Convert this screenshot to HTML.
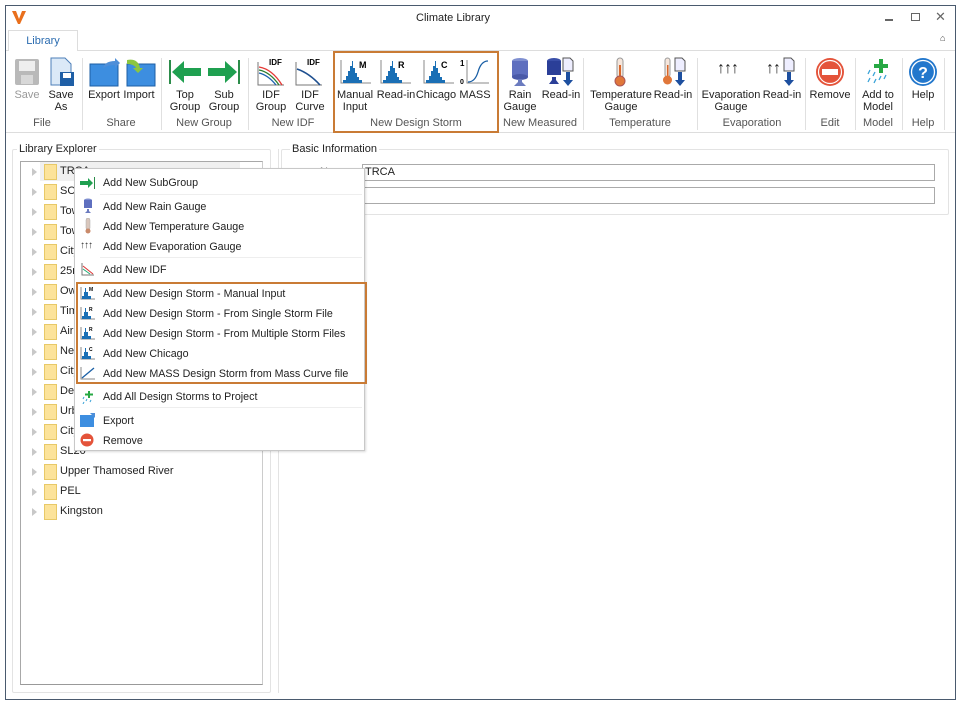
<!DOCTYPE html>
<html><head><meta charset="utf-8"><style>
*{margin:0;padding:0;box-sizing:border-box}
body{width:965px;height:709px;background:#fff;font-family:"Liberation Sans",sans-serif;font-size:11px;color:#222;position:relative;overflow:hidden}
.a{position:absolute}
.t{position:absolute;white-space:nowrap;font-size:11px;line-height:12px;text-align:center}
.gl{position:absolute;white-space:nowrap;font-size:11px;color:#555;text-align:center}
.sep{position:absolute;width:1px;background:#e0e0e0;top:58px;height:72px}
.mi{position:absolute;left:103px;font-size:10.7px;white-space:nowrap;color:#222}
.tr{position:absolute;left:32px;height:16px;font-size:11px;white-space:nowrap}
.tr i{position:absolute;left:0;top:4px;width:0;height:0;border-left:5px solid #c8c8c8;border-top:4px solid transparent;border-bottom:4px solid transparent}
.tr b{position:absolute;left:12px;top:0;width:13px;height:16px;background:#fce39a;border:1px solid #e8c968}
.tr span{position:absolute;left:28px;top:1px}
</style></head><body>
<div class="a" style="left:5px;top:5px;width:951px;height:695px;border:1px solid #4a5a6e"></div>
<svg class="a" style="left:11px;top:10px" width="16" height="15"><path d="M1 1 L5 1 L8 9 L11 1 L15 1 L9 14 L7 14 Z" fill="#e96f1c"/></svg>
<div class="a" style="left:0;width:906px;top:12px;text-align:center;font-size:11px">Climate Library</div>
<div class="a" style="left:885px;top:19px;width:8px;height:2px;background:#666"></div>
<div class="a" style="left:911px;top:13px;width:9px;height:8px;border:1px solid #666"></div>
<div class="a" style="left:935px;top:9px;font-size:13px;color:#666">✕</div>
<div class="a" style="left:940px;top:33px;font-size:9px;color:#444">⌂</div>
<div class="a" style="left:8px;top:30px;width:70px;height:21px;border:1px solid #ddd;border-bottom:none;background:#fff;color:#2b6cb0;text-align:center;line-height:20px">Library</div>
<div class="a" style="left:78px;top:50px;width:877px;height:1px;background:#ddd"></div>
<div class="a" style="left:6px;top:50px;width:2px;height:1px;background:#ddd"></div>
<div class="a" style="left:6px;top:132px;width:949px;height:1px;background:#ddd"></div>

<svg class="a" style="left:14px;top:58px" width="26" height="28"><rect x="1" y="1" width="24" height="26" rx="2" fill="#b9b9b9"/><rect x="5" y="3" width="16" height="10" fill="#eee"/><rect x="7" y="17" width="12" height="9" fill="#d8d8d8"/></svg>
<div class="t" style="left:10px;top:89px;width:34px;color:#999">Save</div>
<svg class="a" style="left:48px;top:57px" width="28" height="30"><path d="M3 1 H17 L23 7 V28 H3 Z" fill="#dbe9f7" stroke="#4e7fb8"/><rect x="12" y="15" width="14" height="14" fill="#1f5fa6"/><rect x="15" y="16" width="8" height="5" fill="#fff"/></svg>
<div class="t" style="left:44px;top:89px;width:34px">Save<br>As</div>
<div class="gl" style="left:20px;top:117px;width:44px">File</div>
<div class="sep" style="left:82px"></div>
<svg class="a" style="left:89px;top:57px" width="32" height="30"><rect x="1" y="7" width="28" height="22" fill="#3d8ee0" stroke="#1d5fa5"/><path d="M14 11 Q16 4 26 4 L26 1 L31 6 L26 11 L26 8 Q19 8 14 11Z" fill="#4f8fd8"/></svg>
<div class="t" style="left:86px;top:89px;width:36px">Export</div>
<svg class="a" style="left:124px;top:57px" width="32" height="30"><rect x="3" y="7" width="28" height="22" fill="#3d8ee0" stroke="#1d5fa5"/><path d="M3 3 Q14 1 16 11 L19 11 L14 16 L9 11 L12 11 Q10 7 3 7Z" fill="#8cc63f"/></svg>
<div class="t" style="left:121px;top:89px;width:36px">Import</div>
<div class="gl" style="left:90px;top:117px;width:62px">Share</div>
<div class="sep" style="left:161px"></div>
<svg class="a" style="left:169px;top:58px" width="34" height="28"><rect x="0" y="2" width="2" height="24" fill="#2c8c4a"/><path d="M3 14 L15 3 V10 H32 V18 H15 V25 Z" fill="#1fa050"/></svg>
<div class="t" style="left:166px;top:89px;width:38px">Top<br>Group</div>
<svg class="a" style="left:206px;top:58px" width="34" height="28"><rect x="32" y="2" width="2" height="24" fill="#2c8c4a"/><path d="M31 14 L19 3 V10 H2 V18 H19 V25 Z" fill="#1fa050"/></svg>
<div class="t" style="left:205px;top:89px;width:38px">Sub<br>Group</div>
<div class="gl" style="left:168px;top:117px;width:72px">New Group</div>
<div class="sep" style="left:248px"></div>
<svg class="a" style="left:256px;top:57px" width="30" height="30"><path d="M2 5 V28 H28" stroke="#777" fill="none"/><path d="M3 10 Q16 12 26 28" stroke="#e53935" fill="none" stroke-width="1.3"/><path d="M3 13 Q14 15 23 28" stroke="#2e7d32" fill="none" stroke-width="1.3"/><path d="M3 16 Q12 18 20 28" stroke="#1e63b0" fill="none" stroke-width="1.3"/><text x="13" y="8" font-size="8" font-weight="bold" font-family="Liberation Sans">IDF</text></svg>
<div class="t" style="left:253px;top:89px;width:36px">IDF<br>Group</div>
<svg class="a" style="left:294px;top:57px" width="30" height="30"><path d="M2 5 V28 H28" stroke="#777" fill="none"/><path d="M3 12 Q15 16 26 28" stroke="#1e4f8f" fill="none" stroke-width="1.6"/><text x="13" y="8" font-size="8" font-weight="bold" font-family="Liberation Sans">IDF</text></svg>
<div class="t" style="left:292px;top:89px;width:36px">IDF<br>Curve</div>
<div class="gl" style="left:262px;top:117px;width:62px">New IDF</div>
<svg class="a" style="left:340px;top:58px" width="32" height="26"><path d="M1 2 V25 H31" stroke="#888" fill="none"/><path d="M3 25 V22 H6 V18 H8 V13 H10 V8 H12 V3 H13 V10 H15 V15 H17 V19 H19 V22 H22 V25Z" fill="#1a6fb5"/><text x="19" y="10" font-size="9" font-weight="bold" font-family="Liberation Sans">M</text></svg>
<svg class="a" style="left:380px;top:58px" width="32" height="26"><path d="M1 2 V25 H31" stroke="#888" fill="none"/><path d="M3 25 V22 H6 V18 H8 V13 H10 V8 H12 V3 H13 V10 H15 V15 H17 V19 H19 V22 H22 V25Z" fill="#1a6fb5"/><text x="18" y="10" font-size="9" font-weight="bold" font-family="Liberation Sans">R</text></svg>
<svg class="a" style="left:423px;top:58px" width="32" height="26"><path d="M1 2 V25 H31" stroke="#888" fill="none"/><path d="M3 25 V22 H6 V18 H8 V13 H10 V8 H12 V3 H13 V10 H15 V15 H17 V19 H19 V22 H22 V25Z" fill="#1a6fb5"/><text x="18" y="10" font-size="9" font-weight="bold" font-family="Liberation Sans">C</text></svg>
<svg class="a" style="left:459px;top:58px" width="32" height="26"><text x="1" y="8" font-size="8" font-weight="bold" font-family="Liberation Sans">1</text><text x="1" y="26" font-size="7" font-weight="bold" font-family="Liberation Sans">0</text><path d="M8 2 V25 H30" stroke="#888" fill="none"/><path d="M9 24 Q16 24 19 14 Q22 3 29 3" stroke="#1a5fa5" fill="none" stroke-width="1.3"/></svg>
<div class="t" style="left:334px;top:89px;width:42px">Manual<br>Input</div>
<div class="t" style="left:375px;top:89px;width:42px">Read-in</div>
<div class="t" style="left:415px;top:89px;width:42px">Chicago</div>
<div class="t" style="left:457px;top:89px;width:36px">MASS</div>
<div class="gl" style="left:336px;top:117px;width:160px">New Design Storm</div>
<div class="a" style="left:333px;top:51px;width:166px;height:82px;border:2px solid #c97b35"></div>
<svg class="a" style="left:509px;top:57px" width="22" height="30"><ellipse cx="11" cy="4" rx="8" ry="3" fill="#7f8fd0"/><rect x="3" y="4" width="16" height="16" fill="#5e6fbf"/><ellipse cx="11" cy="20" rx="8" ry="3" fill="#4a5aa8"/><path d="M9 22 H13 V25 L17 29 H5 L9 25Z" fill="#6b7bbf"/></svg>
<div class="t" style="left:502px;top:89px;width:36px">Rain<br>Gauge</div>
<svg class="a" style="left:545px;top:57px" width="30" height="30"><ellipse cx="9" cy="4" rx="7" ry="3" fill="#3a4fa8"/><rect x="2" y="4" width="14" height="14" fill="#2b3f98"/><path d="M7 20 H11 V23 L14 27 H4 L7 23Z" fill="#2b3f98"/><path d="M18 1 H25 L28 4 V14 H18Z" fill="#eef" stroke="#555"/><path d="M21 15 V23 H18 L23 29 L28 23 H25 V15Z" fill="#1d4f9f"/></svg>
<div class="t" style="left:540px;top:89px;width:42px">Read-in</div>
<div class="gl" style="left:500px;top:117px;width:80px">New Measured</div>
<div class="sep" style="left:583px"></div>
<svg class="a" style="left:612px;top:57px" width="16" height="30"><rect x="5" y="1" width="6" height="20" rx="3" fill="#f5e6dc" stroke="#999"/><rect x="7" y="8" width="2" height="14" fill="#d9662a"/><circle cx="8" cy="24" r="5" fill="#e0773a" stroke="#a55"/></svg>
<div class="t" style="left:588px;top:89px;width:66px">Temperature<br>Gauge</div>
<svg class="a" style="left:662px;top:57px" width="26" height="30"><rect x="3" y="1" width="5" height="19" rx="2.5" fill="#f5e6dc" stroke="#999"/><rect x="5" y="8" width="1.5" height="13" fill="#d9662a"/><circle cx="5.5" cy="23" r="4.5" fill="#e0773a"/><path d="M13 1 H20 L23 4 V14 H13Z" fill="#eef" stroke="#555"/><path d="M16 15 V23 H13 L18 29 L23 23 H20 V15Z" fill="#1d4f9f"/></svg>
<div class="t" style="left:652px;top:89px;width:42px">Read-in</div>
<div class="gl" style="left:588px;top:117px;width:104px">Temperature</div>
<div class="sep" style="left:697px"></div>
<div class="a" style="left:717px;top:60px;font-size:16px;letter-spacing:-1px">↑↑↑</div>
<div class="t" style="left:701px;top:89px;width:60px">Evaporation<br>Gauge</div>
<div class="a" style="left:766px;top:60px;font-size:16px;letter-spacing:-1px">↑↑</div>
<svg class="a" style="left:782px;top:57px" width="14" height="30"><path d="M2 1 H9 L12 4 V14 H2Z" fill="#eef" stroke="#555"/><path d="M5 15 V23 H2 L7 29 L12 23 H9 V15Z" fill="#1d4f9f"/></svg>
<div class="t" style="left:761px;top:89px;width:42px">Read-in</div>
<div class="gl" style="left:700px;top:117px;width:104px">Evaporation</div>
<div class="sep" style="left:805px"></div>
<svg class="a" style="left:815px;top:57px" width="30" height="30"><circle cx="15" cy="15" r="14" fill="#e4533a"/><circle cx="15" cy="15" r="11.5" fill="none" stroke="#fff" stroke-width="1.2"/><rect x="7" y="12" width="16" height="6" fill="#fff"/></svg>
<div class="t" style="left:808px;top:89px;width:44px">Remove</div>
<div class="gl" style="left:810px;top:117px;width:40px">Edit</div>
<div class="sep" style="left:855px"></div>
<svg class="a" style="left:866px;top:58px" width="26" height="28"><rect x="13" y="1" width="4" height="14" fill="#27a844"/><rect x="8" y="6" width="14" height="4" fill="#27a844"/><g stroke="#3aa3d8" stroke-width="1.3"><path d="M4 12 L2 16M9 14 L7 18M4 20 L2 24M10 21 L8 25M15 18 L13 22M20 17 L18 21"/></g></svg>
<div class="t" style="left:858px;top:89px;width:40px">Add to<br>Model</div>
<div class="gl" style="left:858px;top:117px;width:40px">Model</div>
<div class="sep" style="left:902px"></div>
<svg class="a" style="left:908px;top:57px" width="30" height="30"><circle cx="15" cy="15" r="14" fill="#2277cc"/><circle cx="15" cy="15" r="11.5" fill="none" stroke="#fff" stroke-width="1.3"/><text x="15" y="21" text-anchor="middle" font-size="16" font-weight="bold" fill="#fff" font-family="Liberation Sans">?</text></svg>
<div class="t" style="left:904px;top:89px;width:38px">Help</div>
<div class="gl" style="left:904px;top:117px;width:38px">Help</div>
<div class="sep" style="left:944px"></div>

<div class="a" style="left:12px;top:149px;width:259px;height:544px;border:1px solid #e3e3e3;border-radius:2px"></div>
<div class="a" style="left:17px;top:143px;background:#fff;padding:0 2px">Library Explorer</div>
<div class="a" style="left:20px;top:161px;width:243px;height:524px;border:1px solid #a8a8a8;border-right-color:#ccc;border-bottom-color:#999"></div>
<div class="a" style="left:40px;top:162px;width:200px;height:19px;background:#f0f0f0"></div>
<div class="tr" style="top:164px"><i></i><b></b><span>TRCA</span></div>
<div class="tr" style="top:184px"><i></i><b></b><span>SCS</span></div>
<div class="tr" style="top:204px"><i></i><b></b><span>Tow</span></div>
<div class="tr" style="top:224px"><i></i><b></b><span>Tow</span></div>
<div class="tr" style="top:244px"><i></i><b></b><span>City</span></div>
<div class="tr" style="top:264px"><i></i><b></b><span>25m</span></div>
<div class="tr" style="top:284px"><i></i><b></b><span>Ow</span></div>
<div class="tr" style="top:304px"><i></i><b></b><span>Tim</span></div>
<div class="tr" style="top:324px"><i></i><b></b><span>Air</span></div>
<div class="tr" style="top:344px"><i></i><b></b><span>New</span></div>
<div class="tr" style="top:364px"><i></i><b></b><span>City</span></div>
<div class="tr" style="top:384px"><i></i><b></b><span>Dev</span></div>
<div class="tr" style="top:404px"><i></i><b></b><span>Urb</span></div>
<div class="tr" style="top:424px"><i></i><b></b><span>City</span></div>
<div class="tr" style="top:444px"><i></i><b></b><span>SL20</span></div>
<div class="tr" style="top:464px"><i></i><b></b><span>Upper Thamosed River</span></div>
<div class="tr" style="top:484px"><i></i><b></b><span>PEL</span></div>
<div class="tr" style="top:504px"><i></i><b></b><span>Kingston</span></div>

<div class="a" style="left:278px;top:149px;width:1px;height:544px;background:#e3e3e3"></div>
<div class="a" style="left:281px;top:149px;width:668px;height:66px;border:1px solid #e3e3e3;border-radius:2px"></div>
<div class="a" style="left:290px;top:143px;background:#fff;padding:0 2px">Basic Information</div>
<div class="a" style="left:320px;top:166px;color:#555">Name</div>
<div class="a" style="left:362px;top:164px;width:573px;height:17px;border:1px solid #aaa;padding-left:2px;line-height:15px">TRCA</div>
<div class="a" style="left:362px;top:187px;width:573px;height:17px;border:1px solid #aaa"></div>

<div class="a" style="left:74px;top:168px;width:291px;height:283px;background:#fff;border:1px solid #c8c8c8;box-shadow:1px 1px 2px rgba(0,0,0,.15)"></div>
<div class="a" style="left:100px;top:194px;width:262px;height:1px;background:#eee"></div>
<div class="a" style="left:100px;top:257px;width:262px;height:1px;background:#eee"></div>
<div class="a" style="left:100px;top:407px;width:262px;height:1px;background:#eee"></div>
<svg class="a" style="left:80px;top:177px" width="16" height="12"><path d="M0 4 H8 V1 L13 6 L8 11 V8 H0Z" fill="#1fa050"/><rect x="14" y="0" width="1" height="12" fill="#2c8c4a"/></svg>
<div class="mi" style="top:177px">Add New SubGroup</div>
<svg class="a" style="left:82px;top:198px" width="12" height="16"><ellipse cx="6" cy="2" rx="4" ry="1.5" fill="#7f8fd0"/><rect x="2" y="2" width="8" height="8" fill="#5e6fbf"/><path d="M5 11 H7 V13 L9 15 H3 L5 13Z" fill="#6b7bbf"/></svg>
<div class="mi" style="top:201px">Add New Rain Gauge</div>
<svg class="a" style="left:84px;top:218px" width="8" height="16"><rect x="2" y="0" width="4" height="12" rx="2" fill="#d9c7bd" stroke="#aaa" stroke-width=".5"/><circle cx="4" cy="13" r="2.5" fill="#c98a6a"/></svg>
<div class="mi" style="top:221px">Add New Temperature Gauge</div>
<div class="a" style="left:80px;top:240px;font-size:10px;letter-spacing:-1px;color:#333">↑↑↑</div>
<div class="mi" style="top:241px">Add New Evaporation Gauge</div>
<svg class="a" style="left:81px;top:262px" width="14" height="14"><path d="M1 1 V13 H13" stroke="#777" fill="none"/><path d="M2 4 L12 12" stroke="#d33" /><path d="M2 7 L9 12" stroke="#2a7"/></svg>
<div class="mi" style="top:264px">Add New IDF</div>
<svg class="a" style="left:80px;top:286px" width="16" height="14"><path d="M1 1 V13 H15" stroke="#888" fill="none"/><path d="M2 13 V10 H4 V6 H5 V2 H6 V6 H8 V10 H11 V13Z" fill="#1a6fb5"/><text x="9" y="5" font-size="5" font-weight="bold" font-family="Liberation Sans">M</text></svg>
<div class="mi" style="top:288px">Add New Design Storm - Manual Input</div>
<svg class="a" style="left:80px;top:306px" width="16" height="14"><path d="M1 1 V13 H15" stroke="#888" fill="none"/><path d="M2 13 V10 H4 V6 H5 V2 H6 V6 H8 V10 H11 V13Z" fill="#1a6fb5"/><text x="9" y="5" font-size="5" font-weight="bold" font-family="Liberation Sans">R</text></svg>
<div class="mi" style="top:308px">Add New Design Storm - From Single Storm File</div>
<svg class="a" style="left:80px;top:326px" width="16" height="14"><path d="M1 1 V13 H15" stroke="#888" fill="none"/><path d="M2 13 V10 H4 V6 H5 V2 H6 V6 H8 V10 H11 V13Z" fill="#1a6fb5"/><text x="9" y="5" font-size="5" font-weight="bold" font-family="Liberation Sans">R</text></svg>
<div class="mi" style="top:328px">Add New Design Storm - From Multiple Storm Files</div>
<svg class="a" style="left:80px;top:346px" width="16" height="14"><path d="M1 1 V13 H15" stroke="#888" fill="none"/><path d="M2 13 V10 H4 V6 H5 V2 H6 V6 H8 V10 H11 V13Z" fill="#1a6fb5"/><text x="9" y="5" font-size="5" font-weight="bold" font-family="Liberation Sans">C</text></svg>
<div class="mi" style="top:348px">Add New Chicago</div>
<svg class="a" style="left:80px;top:366px" width="16" height="14"><path d="M1 1 V13 H15" stroke="#888" fill="none"/><path d="M2 12 L14 2" stroke="#1a5fa5" stroke-width="1.3"/></svg>
<div class="mi" style="top:368px">Add New MASS Design Storm from Mass Curve file</div>
<div class="a" style="left:76px;top:282px;width:291px;height:102px;border:2px solid #c97b35"></div>
<svg class="a" style="left:81px;top:390px" width="14" height="14"><rect x="7" y="1" width="2" height="7" fill="#27a844"/><rect x="4" y="3.5" width="8" height="2" fill="#27a844"/><path d="M3 7 L2 9M6 9 L5 11M3 12 L2 14M10 10 L9 12" stroke="#3aa3d8"/></svg>
<div class="mi" style="top:391px">Add All Design Storms to Project</div>
<svg class="a" style="left:80px;top:413px" width="16" height="14"><rect x="0" y="2" width="14" height="12" fill="#3d8ee0"/><path d="M10 0 L15 0 L15 5Z" fill="#4f8fd8"/></svg>
<div class="mi" style="top:415px">Export</div>
<svg class="a" style="left:80px;top:433px" width="14" height="14"><circle cx="7" cy="7" r="6.5" fill="#e4533a"/><rect x="3" y="6" width="8" height="2.2" fill="#fff"/></svg>
<div class="mi" style="top:435px">Remove</div>
</body></html>
